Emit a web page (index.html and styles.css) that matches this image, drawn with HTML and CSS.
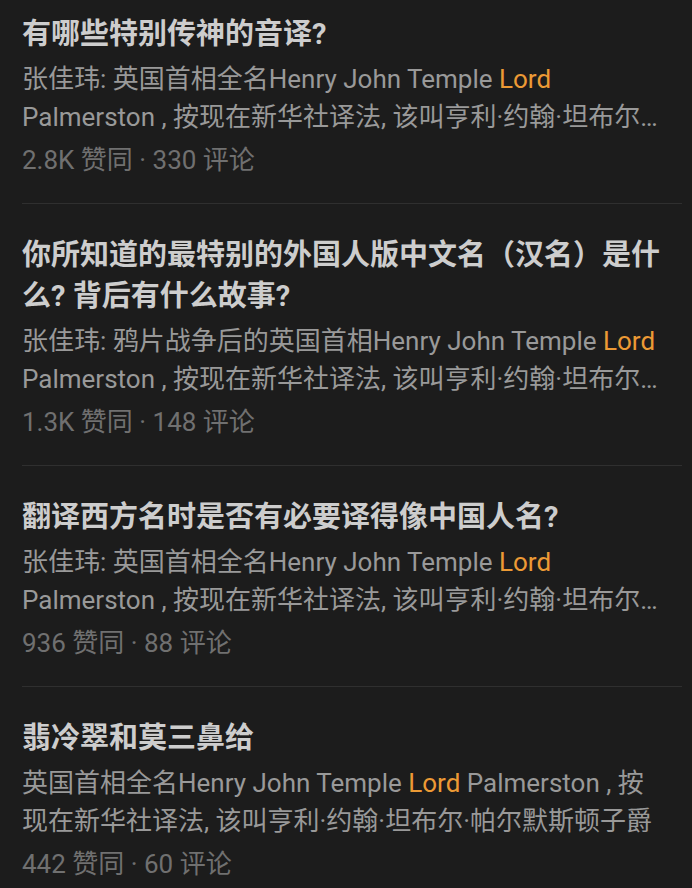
FILE: index.html
```html
<!DOCTYPE html>
<html lang="zh-CN">
<head>
<meta charset="utf-8">
<title>音译</title>
<link rel="stylesheet" href="styles.css">
</head>
<body>
<div class="list">
  <div class="item first">
    <div class="content">
      <h2 class="title">有哪些特别传神的音译?</h2>
      <p class="excerpt">张佳玮: 英国首相全名Henry John Temple <span class="hl">Lord</span> Palmerston , 按现在新华社译法, 该叫亨利·约翰·坦布尔·帕尔默斯顿子爵, 简称巴麦尊</p>
      <div class="meta">2.8K 赞同 · 330 评论</div>
    </div>
  </div>
  <div class="item">
    <div class="content">
      <h2 class="title">你所知道的最特别的外国人版中文名（汉名）是什么? 背后有什么故事?</h2>
      <p class="excerpt">张佳玮: 鸦片战争后的英国首相Henry John Temple <span class="hl">Lord</span> Palmerston , 按现在新华社译法, 该叫亨利·约翰·坦布尔·帕尔默斯顿子爵, 简称巴麦尊</p>
      <div class="meta">1.3K 赞同 · 148 评论</div>
    </div>
  </div>
  <div class="item">
    <div class="content">
      <h2 class="title">翻译西方名时是否有必要译得像中国人名?</h2>
      <p class="excerpt">张佳玮: 英国首相全名Henry John Temple <span class="hl">Lord</span> Palmerston , 按现在新华社译法, 该叫亨利·约翰·坦布尔·帕尔默斯顿子爵, 简称巴麦尊</p>
      <div class="meta">936 赞同 · 88 评论</div>
    </div>
  </div>
  <div class="item">
    <div class="content">
      <h2 class="title">翡冷翠和莫三鼻给</h2>
      <p class="excerpt">英国首相全名Henry John Temple <span class="hl">Lord</span> Palmerston , 按现在新华社译法, 该叫亨利·约翰·坦布尔·帕尔默斯顿子爵</p>
      <div class="meta">442 赞同 · 60 评论</div>
    </div>
  </div>
</div>
</body>
</html>
```
FILE: styles.css
```css
html, body {
  margin: 0;
  padding: 0;
  background: #1c1c1c;
}
body {
  font-family: Roboto, "Noto Sans CJK SC", sans-serif;
  width: 692px;
  height: 888px;
  overflow: hidden;
}
.list {
  padding: 0 10px 0 22px;
}
.item {
  padding: 31px 0 24px;
  border-bottom: 1px solid #2f2f2f;
}
.item.first {
  padding-top: 14px;
}
.content {
  padding-right: 10px;
}
.title {
  margin: 0;
  font-size: 29px;
  line-height: 41px;
  font-weight: 700;
  color: #cdcdcd;
}
.excerpt {
  margin: 5px 0 0;
  padding-right: 10px;
  font-size: 26px;
  line-height: 38px;
  color: #999999;
  display: -webkit-box;
  -webkit-box-orient: vertical;
  -webkit-line-clamp: 2;
  overflow: hidden;
}
.hl {
  color: #ec9a35;
}
.meta {
  margin-top: 5px;
  font-size: 26px;
  line-height: 38px;
  color: #707070;
}
```
